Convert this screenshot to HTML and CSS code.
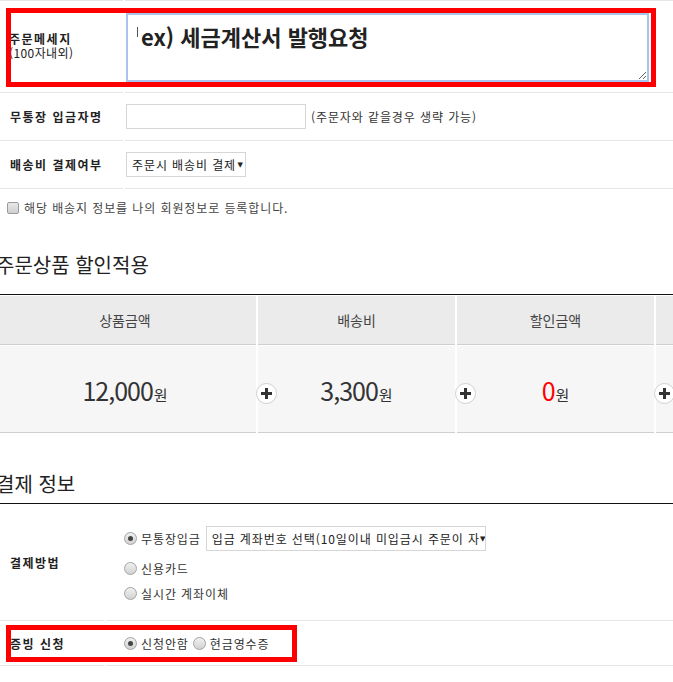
FILE: index.html
```html
<!DOCTYPE html>
<html lang="ko">
<head>
    <meta charset="UTF-8">
    <title>주문서 작성</title>
    <link rel="stylesheet" href="styles.css">
</head>
<body>
    <div class="order-form">
        <div class="form-row row-message">
            <div class="form-label">
                <div>주문메세지</div>
                <div class="label-note">(100자내외)</div>
            </div>
            <div class="form-field">
                <textarea class="message-box">ex) 세금계산서 발행요청</textarea>
                <span class="caret"></span>
            </div>
            <div class="mark mark-message"></div>
        </div>
        <div class="form-row row-depositor">
            <div class="form-label">무통장 입금자명</div>
            <div class="form-field">
                <input type="text" class="text-input">
                <span class="field-help">(주문자와 같을경우 생략 가능)</span>
            </div>
        </div>
        <div class="form-row row-shipping">
            <div class="form-label">배송비 결제여부</div>
            <div class="form-field">
                <div class="select-box select-shipping"><span>주문시 배송비 결제</span><span class="arrow">▼</span></div>
            </div>
        </div>
        <div class="agree-row">
            <span class="checkbox"></span>
            <span>해당 배송지 정보를 나의 회원정보로 등록합니다.</span>
        </div>
    </div>

    <h3 class="section-title title-discount">주문상품 할인적용</h3>
    <div class="price-summary">
        <div class="summary-head">상품금액</div>
        <div class="summary-head">배송비</div>
        <div class="summary-head">할인금액</div>
        <div class="summary-head"></div>

        <div class="summary-value">
            <span class="amount">12,000</span><span class="won">원</span>
        </div>
        <div class="summary-value">
            <svg class="plus" width="21" height="21" viewBox="0 0 21 21"><circle cx="10.5" cy="10.5" r="10" fill="#fff" stroke="#cfcfcf"/><path d="M10.5 5v11M5 10.5h11" stroke="#333" stroke-width="3"/></svg>
            <span class="amount">3,300</span><span class="won">원</span>
        </div>
        <div class="summary-value">
            <svg class="plus" width="21" height="21" viewBox="0 0 21 21"><circle cx="10.5" cy="10.5" r="10" fill="#fff" stroke="#cfcfcf"/><path d="M10.5 5v11M5 10.5h11" stroke="#333" stroke-width="3"/></svg>
            <span class="amount discount">0</span><span class="won">원</span>
        </div>
        <div class="summary-value">
            <svg class="plus" width="21" height="21" viewBox="0 0 21 21"><circle cx="10.5" cy="10.5" r="10" fill="#fff" stroke="#cfcfcf"/><path d="M10.5 5v11M5 10.5h11" stroke="#333" stroke-width="3"/></svg>
        </div>
    </div>

    <h3 class="section-title title-payment">결제 정보</h3>
    <div class="pay-table">
        <div class="pay-row row-method">
            <div class="pay-label">결제방법</div>
            <div class="pay-field">
                <div class="pay-option option-bank">
                    <span class="radio checked"></span>
                    <span>무통장입금</span>
                    <div class="select-box select-account"><span>입금 계좌번호 선택(10일이내 미입금시 주문이 자</span><span class="arrow">▼</span></div>
                </div>
                <div class="pay-option">
                    <span class="radio"></span>
                    <span>신용카드</span>
                </div>
                <div class="pay-option">
                    <span class="radio"></span>
                    <span>실시간 계좌이체</span>
                </div>
            </div>
        </div>
        <div class="pay-row row-receipt">
            <div class="pay-label">증빙 신청</div>
            <div class="pay-field receipt-field">
                <span class="radio checked"></span>
                <span>신청안함</span>
                <span class="radio"></span>
                <span>현금영수증</span>
            </div>
            <div class="mark mark-receipt"></div>
        </div>
    </div>
</body>
</html>
```

FILE: styles.css
```css
* {
    box-sizing: border-box;
}

html, body {
    margin: 0;
    padding: 0;
}

body {
    width: 673px;
    overflow: hidden;
    font-family: "Noto Sans CJK KR", "Liberation Sans", sans-serif;
    font-size: 12px;
    letter-spacing: 0.9px;
    color: #333;
    background: #fff;
}

/* order form */

.form-row {
    position: relative;
    display: grid;
    grid-template-columns: 123px 1fr;
    column-gap: 2px;
}

.form-label,
.form-field {
    border-bottom: 1px solid #e6e6e6;
    height: 48px;
    display: flex;
    align-items: center;
}

.form-label {
    padding-left: 10px;
    font-weight: bold;
    letter-spacing: 1.5px;
    color: #222;
}

.label-note {
    font-weight: normal;
    letter-spacing: 0.4px;
    line-height: 14px;
}

.row-message .form-label,
.row-message .form-field {
    border-top: 1px solid #e6e6e6;
    height: 93px;
}

.row-message .form-label {
    display: block;
    padding: 31px 0 0 9px;
    line-height: 14px;
}

.form-field {
    position: relative;
    gap: 5px;
}

.message-box {
    margin: 2px 0 0 1px;
    width: 523px;
    height: 69px;
    border: 2px solid #a8c4ee;
    padding: 6px 10px 0 13px;
    font-family: inherit;
    font-size: 22px;
    font-weight: bold;
    line-height: 30px;
    color: #222;
    outline: none;
}

.caret {
    position: absolute;
    left: 12px;
    top: 26px;
    width: 1px;
    height: 10px;
    background: #555;
}

.text-input {
    margin-left: 1px;
    width: 180px;
    height: 25px;
    border: 1px solid #d6d6d6;
    padding: 0 4px;
}

.select-box {
    display: inline-flex;
    align-items: center;
    justify-content: space-between;
    height: 25px;
    border: 1px solid #d6d6d6;
    padding: 0 2px 0 5px;
    background: #fff;
    color: #222;
    white-space: nowrap;
    overflow: hidden;
}

.select-box .arrow {
    font-family: "DejaVu Sans", sans-serif;
    font-size: 7px;
    letter-spacing: 0;
    color: #222;
}

.select-shipping {
    margin-left: 1px;
    width: 120px;
}

.agree-row {
    display: flex;
    align-items: center;
    gap: 5px;
    padding: 10px 7px;
    line-height: 18px;
    color: #444;
}

.checkbox {
    width: 12px;
    height: 12px;
    border: 1px solid #9a9a9a;
    border-radius: 2px;
    background: linear-gradient(#e8e8e8, #cfcfcf);
}

/* section titles */

.section-title {
    margin: 25px 0 16px -4px;
    font-size: 20px;
    font-weight: normal;
    letter-spacing: 0;
    line-height: 26px;
    color: #222;
}

.title-payment {
    margin: 38px 0 6px -4px;
}

/* price summary */

.price-summary {
    margin-left: -6px;
    padding-top: 1px;
    border-top: 1px solid #111;
    display: grid;
    grid-template-columns: 262px 197px 197px 197px;
    column-gap: 2px;
    row-gap: 1px;
    letter-spacing: 0;
}

.summary-head {
    height: 49px;
    border-bottom: 1px solid #cfcfcf;
    background: #ebebeb;
    display: flex;
    align-items: center;
    justify-content: center;
    font-size: 14px;
    color: #444;
}

.summary-value {
    position: relative;
    height: 87px;
    border-bottom: 1px solid #cfcfcf;
    background: #f6f6f6;
    display: flex;
    align-items: baseline;
    justify-content: center;
    padding-top: 26px;
    color: #333;
}

.amount {
    font-size: 25px;
    letter-spacing: -1px;
}

.amount.discount {
    color: #f00;
}

.won {
    font-size: 15px;
    margin-left: 1px;
}

.plus {
    position: absolute;
    left: -2px;
    top: 37px;
}

/* payment */

.pay-table {
    border-top: 1px solid #111;
}

.pay-row {
    position: relative;
    display: grid;
    grid-template-columns: 104px 1fr;
    column-gap: 2px;
}

.pay-label,
.pay-field {
    border-bottom: 1px solid #e6e6e6;
}

.pay-label {
    display: flex;
    align-items: center;
    padding-left: 10px;
    font-weight: bold;
    letter-spacing: 1.5px;
    color: #222;
}

.pay-field {
    padding: 22px 0 14px 18px;
    color: #333;
}

.pay-option {
    display: flex;
    align-items: center;
    gap: 4px;
    height: 25px;
}

.option-bank {
    margin-bottom: 5px;
}

.select-account {
    margin-left: 1px;
    width: 280px;
    padding-left: 5px;
}

.receipt-field {
    display: flex;
    align-items: center;
    gap: 4px;
    height: 45px;
    padding: 0 0 0 18px;
}

.radio {
    position: relative;
    width: 13px;
    height: 13px;
    border: 1px solid #a3a3a3;
    border-radius: 50%;
    background: linear-gradient(#f0f0f0, #d2d2d2);
    flex: none;
}

.radio.checked::after {
    content: '';
    position: absolute;
    left: 3px;
    top: 3px;
    width: 5px;
    height: 5px;
    border-radius: 50%;
    background: #444;
}

/* red highlight marks */

.mark {
    position: absolute;
    border: 5px solid #f00;
    pointer-events: none;
}

.mark-message {
    left: 6px;
    top: 8px;
    width: 650px;
    height: 79px;
}

.mark-receipt {
    left: 6px;
    top: 4px;
    width: 291px;
    height: 37px;
}
```
